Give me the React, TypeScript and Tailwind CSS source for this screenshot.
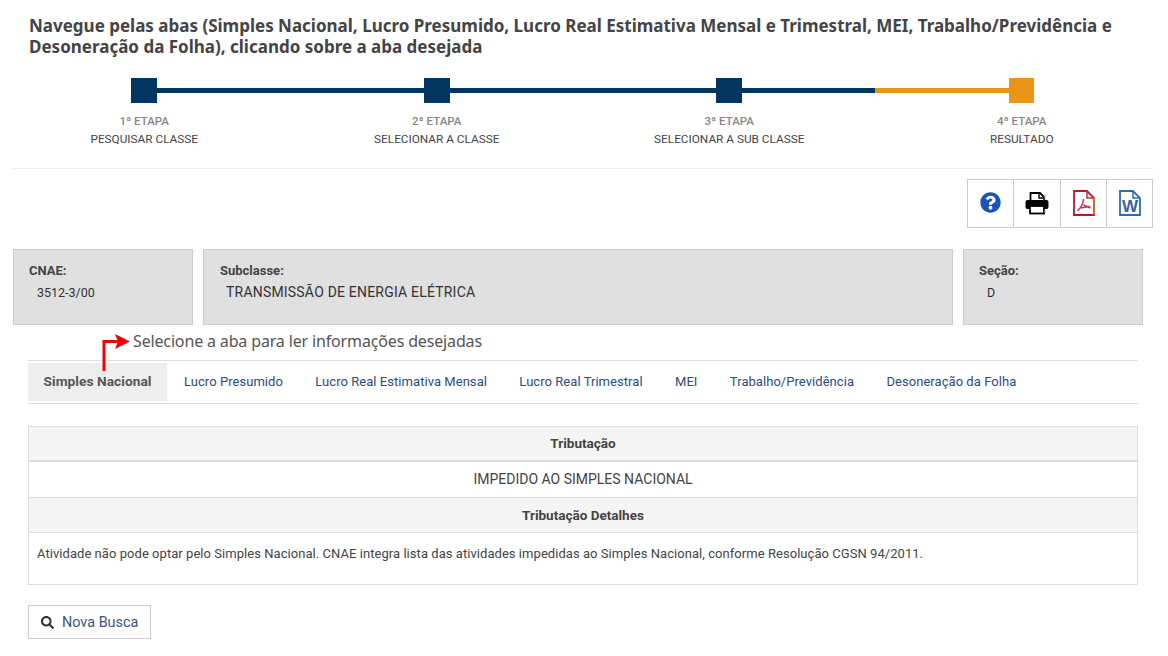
import { FaQuestionCircle, FaSearch } from "react-icons/fa";

const steps = [
  { n: "1ª ETAPA", label: "PESQUISAR CLASSE" },
  { n: "2ª ETAPA", label: "SELECIONAR A CLASSE" },
  { n: "3ª ETAPA", label: "SELECIONAR A SUB CLASSE" },
  { n: "4ª ETAPA", label: "RESULTADO" },
];

const tabs = [
  "Lucro Presumido",
  "Lucro Real Estimativa Mensal",
  "Lucro Real Trimestral",
  "MEI",
  "Trabalho/Previdência",
  "Desoneração da Folha",
];

const PrintIcon = () => (
  <svg width="24" height="24" viewBox="0 0 24 24" fill="none">
    <path d="M5.500 10V2h9.500l4 4v4" stroke="#000" strokeWidth="1.8" fill="#fff" />
    <path d="M14 2v5h5" stroke="#000" strokeWidth="1.4" />
    <rect x="0.500" y="9" width="23" height="9" rx="2" fill="#000" />
    <rect x="5" y="15" width="14" height="7.500" fill="#fff" stroke="#000" strokeWidth="1.8" />
    <path d="M20 3v6M20 19v3" stroke="#e8a050" strokeWidth="0.8" />
  </svg>
);

const PdfIcon = () => (
  <svg width="22" height="26" viewBox="0 0 22 26" fill="none">
    <path d="M1 1h13l7 7v17H1z" stroke="#c4122f" strokeWidth="1.8" />
    <path d="M21 8v17" stroke="#dd6a2b" strokeWidth="1.8" />
    <path d="M14 1v7h7" stroke="#c8302a" strokeWidth="1.5" />
    <path d="M10.500 9c0 4-2 8-6 12M10.500 15l7 3M7 18l10-1.500" stroke="#cc3355" strokeWidth="1.500" />
  </svg>
);

const WordIcon = () => (
  <svg width="22" height="26" viewBox="0 0 22 26" fill="none">
    <path d="M1 1h13l7 7v17H1z" stroke="#2f6cb8" strokeWidth="1.8" />
    <path d="M14 1v7h7" stroke="#2f6cb8" strokeWidth="1.5" />
    <text x="11" y="22" textAnchor="middle" fontSize="17" fontWeight="700" fill="#34659f" fontFamily="Liberation Sans, sans-serif">W</text>
  </svg>
);

export default function App() {
  return (
    <div className="w-[1168px] h-[656px] overflow-hidden bg-white relative font-['Roboto','Liberation_Sans',sans-serif]">
      <h1 className="pl-[29px] pt-[15px] pr-[40px] h-[78px] text-[17px] leading-[21px] font-bold text-[#444] font-['Noto_Sans',sans-serif]">
        Navegue pelas abas (Simples Nacional, Lucro Presumido, Lucro Real Estimativa Mensal e Trimestral, MEI, Trabalho/Previdência e Desoneração da Folha), clicando sobre a aba desejada
      </h1>

      <div className="flex items-center pl-[131px] h-[25px]">
        <div className="w-[26px] h-[25px] bg-[#023660]" />
        <div className="w-[267px] h-[5px] bg-[#023660]" />
        <div className="w-[26px] h-[25px] bg-[#023660]" />
        <div className="w-[266px] h-[5px] bg-[#023660]" />
        <div className="w-[26px] h-[25px] bg-[#023660]" />
        <div className="w-[133px] h-[5px] bg-[#023660]" />
        <div className="w-[134px] h-[5px] bg-[#ea9518]" />
        <div className="w-[25px] h-[25px] bg-[#ea9518]" />
      </div>

      <div className="flex mt-[9px] -ml-[2px] h-[56px]">
        {steps.map((s) => (
          <div key={s.n} className="w-[292.5px] text-center text-[11.8px] leading-[18px]">
            <div className="font-medium text-[#888] text-[11.5px]">{s.n}</div>
            <div className="text-[#444]">{s.label}</div>
          </div>
        ))}
      </div>

      <div className="ml-[13px] w-[1140px] h-px bg-[#eee]" />

      <div className="flex justify-end pr-[15px] mt-[10px]">
        <div className="flex h-[49px] border border-[#ccc] divide-x divide-[#ccc]">
          <div className="w-[46px] pb-[2px] flex items-center justify-center">
            <FaQuestionCircle className="w-[21px] h-[21px] text-[#1a54b8]" />
          </div>
          <div className="w-[47px] pb-[2px] flex items-center justify-center">
            <PrintIcon />
          </div>
          <div className="w-[46px] pb-[2px] flex items-center justify-center">
            <PdfIcon />
          </div>
          <div className="w-[45px] pb-[2px] flex items-center justify-center">
            <WordIcon />
          </div>
        </div>
      </div>

      <div className="flex gap-[10px] pl-[13px] mt-[21px]">
        <InfoBox title="CNAE:" value="3512-3/00" className="w-[180px] pl-[15px]" valueClass="-ml-[15px] pl-[23px] text-[12.5px]" />
        <InfoBox title="Subclasse:" value="TRANSMISSÃO DE ENERGIA ELÉTRICA" className="w-[750px] pl-[16px]" valueClass="-ml-[16px] pl-[22px] text-[14px] tracking-[0.2px]" />
        <InfoBox title="Seção:" value="D" className="w-[180px] pl-[15px]" valueClass="-ml-[15px] pl-[23px] text-[12.5px]" />
      </div>

      <div className="pl-[133px] h-[35px] pt-[5px] text-[16px] tracking-[-0.15px] leading-[22px] text-[#555] font-['Noto_Sans',sans-serif]">
        Selecione a aba para ler informações desejadas
      </div>

      <svg className="absolute left-[100px] top-[330px]" width="34" height="44" viewBox="0 0 34 44" fill="none">
        <path d="M4 41V11.500H20" stroke="#f00000" strokeWidth="3" />
        <path d="M15 4l15 7.500-15 7.500 3-7.500z" fill="#f00000" />
      </svg>

      <div className="ml-[28px] w-[1110px] border-y border-[#ddd] h-[44px] flex items-center text-[13px] tracking-[0.05px]">
        <div className="w-[139px] h-[38px] pb-[1px] bg-[#eee] flex items-center justify-center font-bold text-[#555] text-[13.7px]">
          Simples Nacional
        </div>
        <div className="flex gap-[32.4px] pl-[17px] text-[#2a4d7f]">
          {tabs.map((t) => (
            <span key={t}>{t}</span>
          ))}
        </div>
      </div>

      <div className="ml-[28px] w-[1110px] mt-[22px] h-[159px] border border-[#ddd] text-[14px] text-[#444]">
        <div className="h-[35px] bg-[#f5f5f5] border-b-2 border-[#ddd] flex items-center justify-center font-bold text-[13.5px]">
          Tributação
        </div>
        <div className="h-[36px] border-b border-[#ddd] flex items-center justify-center">
          IMPEDIDO AO SIMPLES NACIONAL
        </div>
        <div className="h-[35px] bg-[#f5f5f5] border-b border-[#ddd] flex items-center justify-center font-bold text-[13.5px]">
          Tributação Detalhes
        </div>
        <div className="pl-[8px] pt-[12px] leading-[18px] text-[13px] tracking-[0.05px]">
          Atividade não pode optar pelo Simples Nacional. CNAE integra lista das atividades impedidas ao Simples Nacional, conforme Resolução CGSN 94/2011.
        </div>
      </div>

      <button className="ml-[28px] mt-[20px] w-[123px] h-[34px] border border-[#ccc] flex items-center pl-[12px] pt-[1px] gap-[8px] text-[14.4px] text-[#3d5478]">
        <FaSearch className="w-[13px] h-[13px] text-[#333]" />
        Nova Busca
      </button>
    </div>
  );
}

function InfoBox({ title, value, className, valueClass }: { title: string; value: string; className: string; valueClass: string }) {
  return (
    <div className={`h-[76px] bg-[#e0e0e0] border border-[#ccc] pt-[12px] text-[#333] ${className}`}>
      <div className="font-bold text-[#444] leading-[18px] text-[13px]">{title}</div>
      <div className={`leading-[21px] mt-[2px] ${valueClass}`}>{value}</div>
    </div>
  );
}
